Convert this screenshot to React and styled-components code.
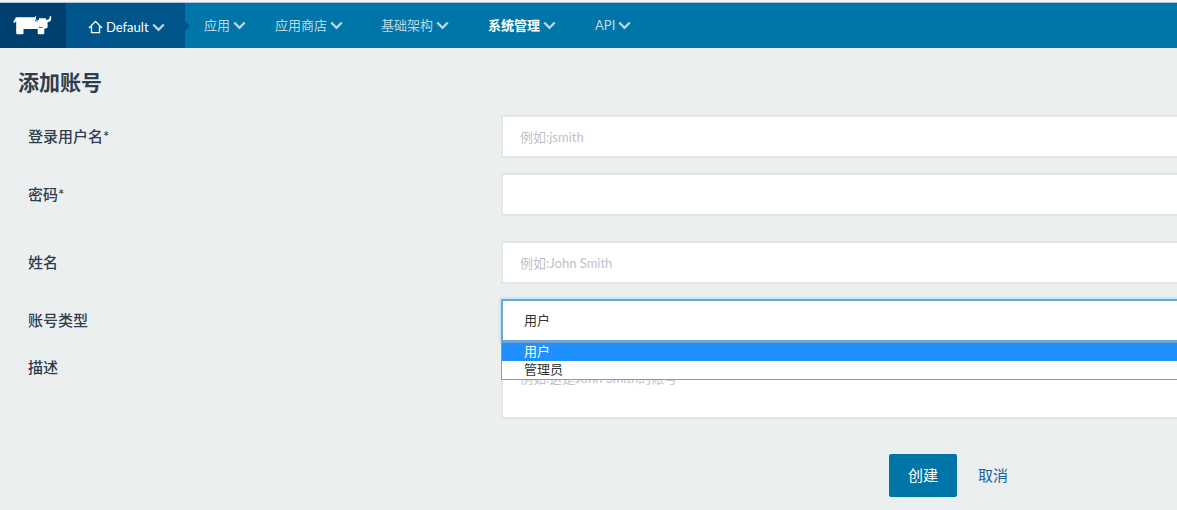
import React from "react";
import styled, { createGlobalStyle } from "styled-components";

const GlobalStyle = createGlobalStyle`
  *, *::before, *::after { box-sizing: border-box; }
  html { overflow-x: hidden; }
  body {
    margin: 0;
    background: #ebeff0;
    color: #2f3d4e;
    font-family: Lato, "Noto Sans CJK SC", sans-serif;
    font-size: 15px;
    line-height: 20px;
  }
`;

const TopEdge = styled.div`
  height: 3px;
  background: #f2f4f7;
  border-bottom: 1px solid #b4c6d2;
`;

const Header = styled.header`
  display: flex;
  height: 45px;
  background: #0075a8;
`;

const Brand = styled.a`
  display: flex;
  align-items: center;
  padding-left: 13px;
  width: 66px;
  background: #00406f;
`;

const Environment = styled.button`
  position: relative;
  display: flex;
  align-items: center;
  gap: 3px;
  width: 119px;
  padding: 3px 0 0 22px;
  border: 0;
  background: #00558b;
  color: #fff;
  font: inherit;
  font-size: 13px;

  &::after {
    content: "";
    position: absolute;
    left: 100%;
    top: 18px;
    border: 5px solid transparent;
    border-left-color: #00558b;
    border-right: 0;
  }
`;

const Nav = styled.nav`
  display: flex;
  padding-left: 9px;
`;

const NavButton = styled.button`
  display: flex;
  align-items: center;
  gap: 3px;
  padding: 0 ${(p) => (p.$tight ? 19 : 20)}px 2px ${(p) => (p.$tight ? 10 : 19)}px;
  border: 0;
  background: none;
  color: ${(p) => (p.$active ? "#fff" : "#b9d9e7")};
  font: inherit;
  font-size: 13px;
  font-weight: ${(p) => (p.$active ? 700 : 400)};

  svg { margin-top: 2px; }
`;

const Chevron = () => (
  <svg width="13" height="9" viewBox="0 0 13 9" fill="none" stroke="#b9d9e7" strokeWidth="2.3" aria-hidden="true">
    <path d="M1.2 1.5 6.5 6.8 11.8 1.5" />
  </svg>
);

const HomeIcon = () => (
  <svg width="15" height="14" viewBox="0 0 15 14" fill="none" stroke="currentColor" strokeWidth="1.3" aria-hidden="true">
    <path d="M1 8 7.5 1.4 14 8M3.5 6.5V12.6H11.5V6.5" />
  </svg>
);

const Cow = () => (
  <svg width="39" height="19" viewBox="0 0 39 19" aria-hidden="true">
    <path
      fill="#fff"
      d="M3 1.2H22V.2H23V3Q23.200 4 24.500 4H26V2.200H33V4Q36 4 36.600 2V.2H38.200V3Q38 5.800 34.600 6.200V11.500L33 12.500H31.300V17.500L30.500 18.200H25.500L24.700 17.500V13H10.500V17.500L9.700 18.200H4L3.200 17.500V5.200L1.400 7 .2 6Z"
    />
    <path fill="none" stroke="#00406f" strokeWidth=".8" d="M22.500 3.500V5H25M26.500 10.500V11.500H29.500" />
  </svg>
);

const Page = styled.main`
  padding: 24px 0 13px;
`;

const Title = styled.h1`
  margin: 0 18px 23px;
  font-size: 21px;
  line-height: 20px;
  font-weight: 700;
`;

const Form = styled.form`
  display: grid;
  gap: 15px;
  overflow: hidden;
`;

const Row = styled.div`
  display: grid;
  grid-template-columns: 473px 1fr;
  align-items: ${(p) => (p.$top ? "start" : "center")};
  padding-left: 28px;
  margin-top: ${(p) => (p.$spaced ? 10 : 0)}px;
`;

const Label = styled.label`
  padding-bottom: 2px;
  font-weight: 500;
`;

const fieldStyle = `
  display: block;
  width: 100%;
  height: 43px;
  border: 2px solid #e2e6e7;
  border-right: 0;
  border-radius: 0;
  background: #fff;
  font: inherit;
  font-size: 13px;
  outline: none;
  &::placeholder { color: #bfc1ca; opacity: 1; }
`;

const Input = styled.input`
  ${fieldStyle}
  padding: 0 17px;
`;

const TextArea = styled.textarea`
  ${fieldStyle}
  height: 62px;
  padding: 9px 17px;
  resize: none;
`;

const SelectWrap = styled.div`
  position: relative;
`;

const Select = styled.select`
  ${fieldStyle}
  appearance: none;
  padding: 0 21px 2px;
  border-color: #66a9df;
  color: #333;
  box-shadow: 0 0 3px 1px #b9def8;
`;

const Menu = styled.ul`
  position: absolute;
  z-index: 1;
  top: 43px;
  left: 0;
  right: 0;
  margin: 0;
  padding: 0;
  list-style: none;
  background: #fff;
  border: 1px solid #7c9dc4;
  border-right: 0;
`;

const MenuItem = styled.li`
  height: 18px;
  padding-left: 22px;
  font-size: 13px;
  line-height: 16px;
  color: ${(p) => (p.$selected ? "#fff" : "#333")};
  background: ${(p) => (p.$selected ? "#1e90ff" : "#fff")};
`;

const Actions = styled.div`
  display: flex;
  justify-content: flex-end;
  gap: 4px;
  margin-top: 20px;
  padding-right: 152px;
`;

const Button = styled.button`
  height: 43px;
  padding: 0 ${(p) => (p.$primary ? 19 : 17)}px 2px;
  border: 0;
  border-radius: 2px;
  background: ${(p) => (p.$primary ? "#0075a8" : "transparent")};
  color: ${(p) => (p.$primary ? "#fff" : "#1f6096")};
  font: inherit;
`;

const navItems = [
  { label: "应用", tight: true },
  { label: "应用商店", tight: true },
  { label: "基础架构" },
  { label: "系统管理", active: true },
  { label: "API" },
];

export default function App() {
  return (
    <>
      <GlobalStyle />
      <TopEdge />
      <Header>
        <Brand href="#" aria-label="Rancher"><Cow /></Brand>
        <Environment type="button"><HomeIcon />Default<Chevron /></Environment>
        <Nav>
          {navItems.map((item) => (
            <NavButton key={item.label} type="button" $tight={item.tight} $active={item.active}>
              {item.label}<Chevron />
            </NavButton>
          ))}
        </Nav>
      </Header>
      <Page>
        <Title>添加账号</Title>
        <Form>
          <Row>
            <Label htmlFor="login">登录用户名*</Label>
            <Input id="login" placeholder="例如:jsmith" />
          </Row>
          <Row>
            <Label htmlFor="password">密码*</Label>
            <Input id="password" type="password" />
          </Row>
          <Row $spaced>
            <Label htmlFor="name">姓名</Label>
            <Input id="name" placeholder="例如:John Smith" />
          </Row>
          <Row>
            <Label htmlFor="kind">账号类型</Label>
            <SelectWrap>
              <Select id="kind" defaultValue="user">
                <option value="user">用户</option>
                <option value="admin">管理员</option>
              </Select>
              <Menu>
                <MenuItem $selected>用户</MenuItem>
                <MenuItem>管理员</MenuItem>
              </Menu>
            </SelectWrap>
          </Row>
          <Row $top>
            <Label htmlFor="description">描述</Label>
            <TextArea id="description" placeholder="例如:这是John Smith的账号" />
          </Row>
          <Actions>
            <Button type="button" $primary>创建</Button>
            <Button type="button">取消</Button>
          </Actions>
        </Form>
      </Page>
    </>
  );
}
